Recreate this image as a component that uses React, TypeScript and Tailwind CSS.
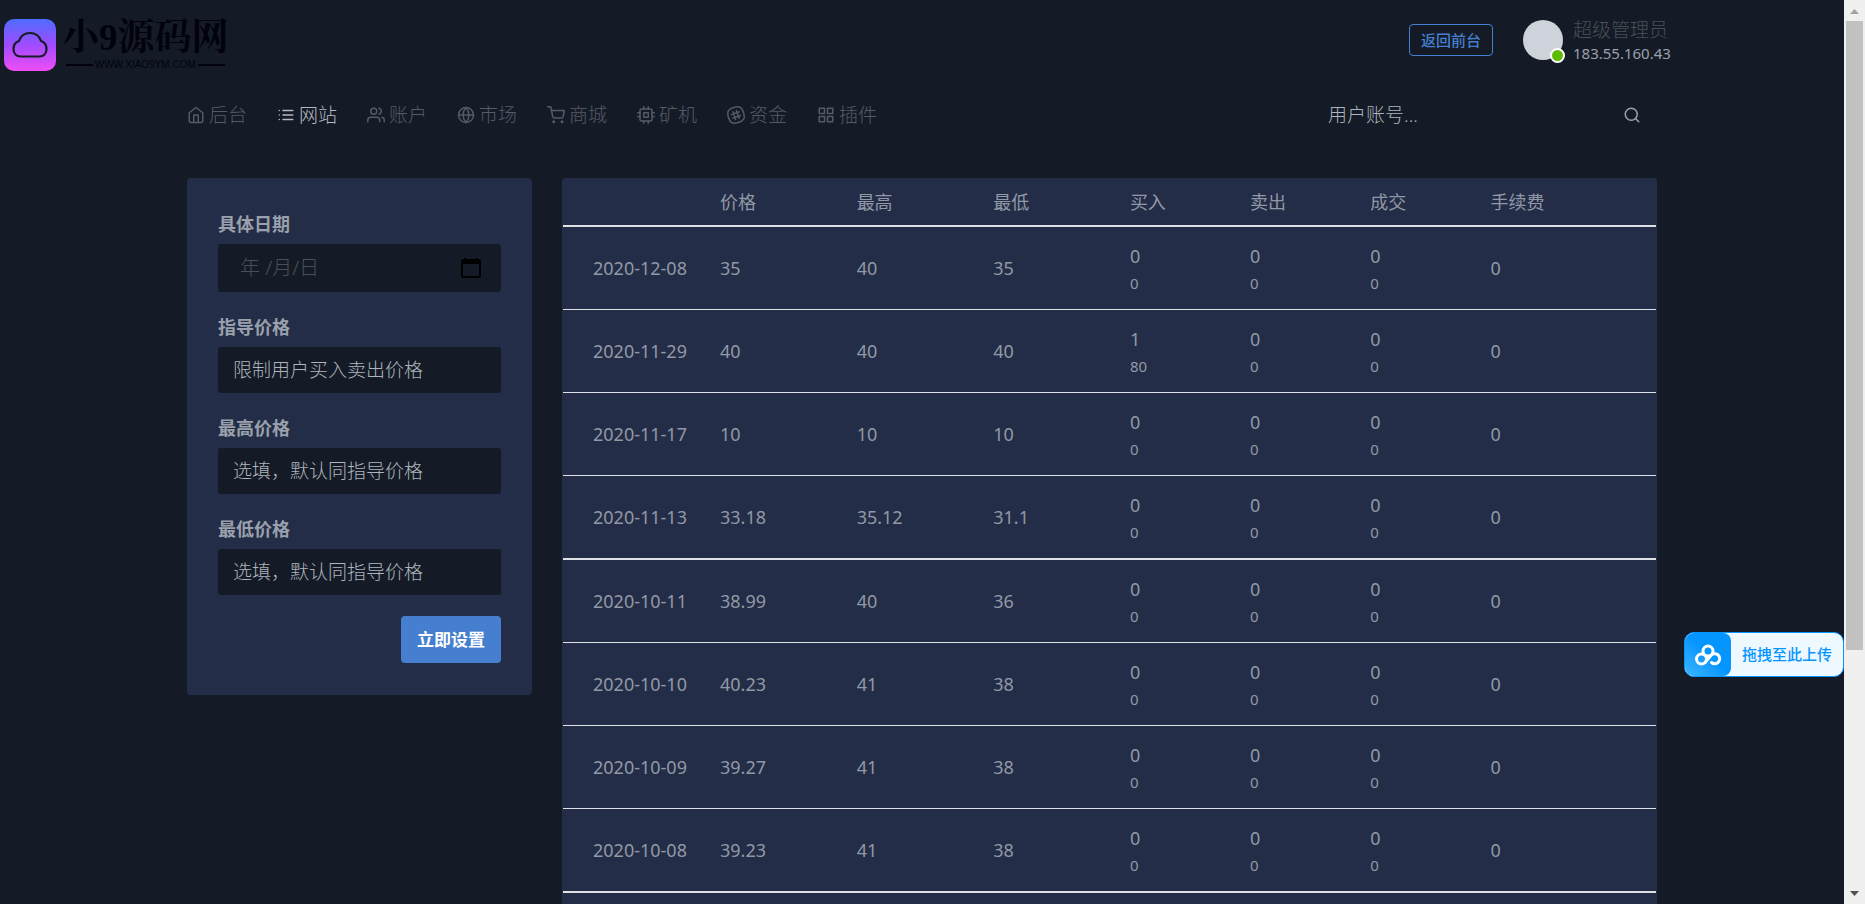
import React from 'react';
import { FiHome, FiList, FiUsers, FiGlobe, FiShoppingCart, FiCpu, FiGrid, FiSearch } from 'react-icons/fi';

const SlackIcon: React.FC = () => (
  <svg width="18" height="18" viewBox="0 0 24 24" fill="none" stroke="currentColor" strokeWidth="2" strokeLinecap="round" strokeLinejoin="round">
    <path d="M22.08 9C19.81 1.41 16.54-.35 9 1.92S-.35 7.46 1.92 15 7.46 24.35 15 22.08 24.35 16.54 22.08 9z" />
    <path d="M12.57 5.99l3.58 10.4M7.85 7.61l3.58 10.4M16.39 7.85l-10.4 3.58M18.01 12.57l-10.4 3.58" />
  </svg>
);

const navItems = [
  { label: '后台', icon: <FiHome size={18} />, active: false },
  { label: '网站', icon: <FiList size={18} />, active: true },
  { label: '账户', icon: <FiUsers size={18} />, active: false },
  { label: '市场', icon: <FiGlobe size={18} />, active: false },
  { label: '商城', icon: <FiShoppingCart size={18} />, active: false },
  { label: '矿机', icon: <FiCpu size={18} />, active: false },
  { label: '资金', icon: <SlackIcon />, active: false },
  { label: '插件', icon: <FiGrid size={18} />, active: false },
];

interface PriceRow {
  date: string;
  price: string;
  high: string;
  low: string;
  buy: [string, string];
  thick?: boolean;
}

const rows: PriceRow[] = [
  { date: '2020-12-08', price: '35', high: '40', low: '35', buy: ['0', '0'], thick: true },
  { date: '2020-11-29', price: '40', high: '40', low: '40', buy: ['1', '80'] },
  { date: '2020-11-17', price: '10', high: '10', low: '10', buy: ['0', '0'] },
  { date: '2020-11-13', price: '33.18', high: '35.12', low: '31.1', buy: ['0', '0'] },
  { date: '2020-10-11', price: '38.99', high: '40', low: '36', buy: ['0', '0'], thick: true },
  { date: '2020-10-10', price: '40.23', high: '41', low: '38', buy: ['0', '0'] },
  { date: '2020-10-09', price: '39.27', high: '41', low: '38', buy: ['0', '0'] },
  { date: '2020-10-08', price: '39.23', high: '41', low: '38', buy: ['0', '0'] },
];

const columns = [
  { label: '', width: 'w-[141px]' },
  { label: '价格', width: 'w-[12.5%]' },
  { label: '最高', width: 'w-[12.5%]' },
  { label: '最低', width: 'w-[12.5%]' },
  { label: '买入', width: 'w-[11%]' },
  { label: '卖出', width: 'w-[11%]' },
  { label: '成交', width: 'w-[11%]' },
  { label: '手续费', width: '' },
];

const priceFields = [
  { id: 'price', label: '指导价格', placeholder: '限制用户买入卖出价格' },
  { id: 'high', label: '最高价格', placeholder: '选填，默认同指导价格' },
  { id: 'low', label: '最低价格', placeholder: '选填，默认同指导价格' },
];

const Logo: React.FC = () => (
  <a href="#" className="flex items-center gap-[6px] text-[#02020f]">
    <svg width="52" height="52" viewBox="0 0 52 52">
      <defs>
        <linearGradient id="logo-bg" x1="0" y1="0" x2="0" y2="1">
          <stop offset="0" stopColor="#4d6dff" />
          <stop offset="0.5" stopColor="#a04bff" />
          <stop offset="1" stopColor="#f04df5" />
        </linearGradient>
      </defs>
      <rect width="52" height="52" rx="10" fill="url(#logo-bg)" />
      <path
        d="M16.500 37.500h19c4 0 7-3 7-7.500c0-4-2-7-5.500-8C35.500 17.500 31.500 14 26 14s-9.500 3.500-11 8C11.500 23 9.500 26 9.500 30C9.500 34.500 12.500 37.500 16.500 37.500z"
        fill="none"
        stroke="#151b26"
        strokeWidth="2.200"
        strokeLinejoin="round"
      />
    </svg>
    <div className="flex flex-col">
      <span className="text-[37px] leading-[40px] font-bold font-['Liberation_Serif','Noto_Serif_CJK_SC','Noto_Sans_CJK_SC',serif]">小9源码网</span>
      <span className="flex items-center gap-[2px] px-1 text-[10px] leading-[14px] font-['Liberation_Sans',sans-serif]">
        <span className="h-[2px] flex-1 bg-[#02020f]" />
        WWW.XIAO9YM.COM
        <span className="h-[2px] flex-1 bg-[#02020f]" />
      </span>
    </div>
  </a>
);

const Header: React.FC = () => (
  <header className="flex h-[91px] items-start justify-between pl-1 pr-[172px]">
    <div className="pt-[18px]">
      <Logo />
    </div>
    <div className="flex items-start gap-[30px] pt-[18px]">
      <button className="mt-[6px] h-8 w-[84px] rounded border border-[#467fcf] text-[15px] leading-[20px] font-medium text-[#467fcf]">
        返回前台
      </button>
      <div className="flex items-start gap-[10px]">
        <span className="relative mt-[2px] block h-10 w-10 rounded-full bg-[#ced2da]">
          <span className="absolute -right-[2px] -bottom-[3px] h-[15px] w-[15px] rounded-full border-2 border-white bg-[#5eba00]" />
        </span>
        <div className="flex w-[99px] flex-col">
          <span className="text-[19px] leading-[24px] font-light text-[#495057]">超级管理员</span>
          <span className="text-[15px] leading-[22px] text-[#9aa0ac]">183.55.160.43</span>
        </div>
      </div>
    </div>
  </header>
);

const Navigation: React.FC = () => (
  <div className="flex h-12 items-center justify-between">
    <nav className="flex gap-[30px]">
      {navItems.map((item) => (
        <a
          key={item.label}
          href="#"
          className={`flex items-center gap-1 text-[19px] leading-[28px] font-light ${item.active ? 'text-[#b4b9c3]' : 'text-[#545a68]'}`}
        >
          {item.icon}
          {item.label}
        </a>
      ))}
    </nav>
    <form className="flex h-12 w-[344px] items-center rounded bg-[#151a27] pr-4 pl-[15px]">
      <input
        type="search"
        aria-label="用户账号"
        placeholder="用户账号..."
        className="min-w-0 flex-1 bg-transparent text-[19px] font-light outline-none placeholder:text-[#adb5bd]"
      />
      <button type="button" aria-label="搜索" className="text-[#9aa0ac]">
        <FiSearch size={18} />
      </button>
    </form>
  </div>
);

const SettingsCard: React.FC = () => (
  <form className="flex w-[345px] shrink-0 flex-col rounded bg-[#232d47] px-[31px] py-8">
    <label htmlFor="date" className="mb-[6px] text-[18px] leading-[28px] font-bold text-[#9aa0ac]">
      具体日期
    </label>
    <div className="mb-[21px] flex h-12 items-center rounded-[3px] bg-[#151b26] pr-5 pl-[22px]">
      <input
        id="date"
        type="text"
        placeholder="年 /月/日"
        className="min-w-0 flex-1 bg-transparent text-[20px] font-light outline-none placeholder:text-[#495057]"
      />
      <svg width="20" height="20" viewBox="0 0 20 20" fill="#000">
        <path d="M3 0h2v1h10V0h2v1h1a2 2 0 0 1 2 2v15a2 2 0 0 1-2 2H2a2 2 0 0 1-2-2V3a2 2 0 0 1 2-2h1zM2 6v12h16V6z" fillRule="evenodd" />
      </svg>
    </div>
    {priceFields.map((field) => (
      <React.Fragment key={field.id}>
        <label htmlFor={field.id} className="mb-[6px] text-[18px] leading-[28px] font-bold text-[#9aa0ac]">
          {field.label}
        </label>
        <input
          id={field.id}
          type="text"
          placeholder={field.placeholder}
          className="mb-[21px] h-[46px] rounded-[3px] bg-[#151b26] px-[15px] text-[19px] font-light outline-none placeholder:text-[#adb5bd]"
        />
      </React.Fragment>
    ))}
    <button type="button" className="h-[47px] w-[100px] self-end rounded bg-[#467fcf] text-[17px] font-bold text-white">
      立即设置
    </button>
  </form>
);

const StackedCell: React.FC<{ values: [string, string] }> = ({ values }) => (
  <td className="px-4 pt-[2px]">
    <div className="leading-[28px]">{values[0]}</div>
    <div className="text-[15px] leading-[26px]">{values[1]}</div>
  </td>
);

const PriceTable: React.FC = () => (
  <div className="min-w-0 flex-1 rounded bg-[#232d47] px-px">
    <table className="w-full table-fixed border-separate border-spacing-0 text-left text-[18px] text-[#9298a5]">
      <thead>
        <tr className="h-[47px]">
          {columns.map((column) => (
            <th key={column.label} className={`px-4 pt-[2px] font-normal ${column.width}`}>
              {column.label}
            </th>
          ))}
        </tr>
      </thead>
      <tbody>
        {rows.map((row) => (
          <tr
            key={row.date}
            className={row.thick ? 'h-[84px] [&>td]:border-t-2 [&>td]:border-[#dee2e6]' : 'h-[83px] [&>td]:border-t [&>td]:border-[#dee2e6]'}
          >
            <td className="pl-[30px] whitespace-nowrap">{row.date}</td>
            <td className="px-4">{row.price}</td>
            <td className="px-4">{row.high}</td>
            <td className="px-4">{row.low}</td>
            <StackedCell values={row.buy} />
            <StackedCell values={['0', '0']} />
            <StackedCell values={['0', '0']} />
            <td className="px-4">0</td>
          </tr>
        ))}
        <tr className="h-[84px]">
          <td colSpan={8} className="border-t-2 border-[#dee2e6]" />
        </tr>
      </tbody>
    </table>
  </div>
);

const UploadWidget: React.FC = () => (
  <button className="absolute top-[632px] right-0 flex h-[45px] w-[160px] items-center overflow-hidden rounded-[10px] border border-[#0595ff] bg-[#eef8ff] text-[15px] font-medium text-[#0595ff]">
    <span className="flex h-full w-[46px] items-center justify-center rounded-r-[8px] bg-linear-to-tr from-[#38b6ff] to-[#0595ff] to-50%">
      <svg width="28" height="22" viewBox="0 0 28 22" fill="none" stroke="#fff" strokeWidth="3" strokeLinecap="round">
        <circle cx="14" cy="7" r="5" />
        <circle cx="7.500" cy="15" r="5" />
        <path d="M11 18.500l5.500-6.500a5 5 0 1 1 1 6.500" />
      </svg>
    </span>
    <span className="flex-1 text-center">拖拽至此上传</span>
  </button>
);

const Scrollbar: React.FC = () => (
  <div className="flex w-[21px] shrink-0 flex-col items-center bg-[#f0f0f0]">
    <svg width="21" height="21" viewBox="0 0 21 21" className="shrink-0">
      <path d="M6 14h9l-4.500-5z" fill="#a3a3a3" />
    </svg>
    <div className="flex w-[17px] flex-1 flex-col">
      <div className="h-[73%] bg-[#c1c1c1]" />
    </div>
    <svg width="21" height="21" viewBox="0 0 21 21" className="shrink-0">
      <path d="M6 8h9l-4.500 5z" fill="#505050" />
    </svg>
  </div>
);

export default function App() {
  return (
    <div className="flex h-screen overflow-hidden bg-[#151b26] font-['Noto_Sans','Noto_Sans_CJK_SC',sans-serif]">
      <div className="relative min-w-0 flex-1 overflow-hidden">
        <Header />
        <div className="mx-auto w-full max-w-[1470px]">
          <Navigation />
          <main className="mt-[39px] flex items-start gap-[30px]">
            <SettingsCard />
            <PriceTable />
          </main>
        </div>
        <UploadWidget />
      </div>
      <Scrollbar />
    </div>
  );
}
